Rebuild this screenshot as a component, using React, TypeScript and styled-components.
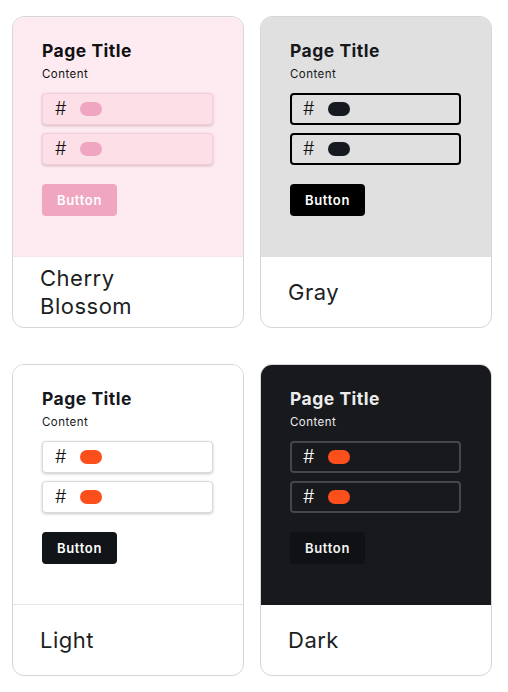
import React, { FC } from "react";
import styled, { createGlobalStyle } from "styled-components";

interface Theme {
  name: string;
  bg: string;
  title: string;
  text: string;
  inputBg: string;
  inputBorder: string;
  inputBorderWidth: number;
  inputShadow: string;
  hash: string;
  pill: string;
  buttonBg: string;
  buttonText: string;
  divider: string;
}

const themes: Theme[] = [
  {
    name: "Cherry Blossom",
    bg: "#fdebf1",
    title: "#111",
    text: "#111",
    inputBg: "#fddfe8",
    inputBorder: "#f1cfd9",
    inputBorderWidth: 1,
    inputShadow: "0 1px 3px rgba(150, 90, 110, 0.35)",
    hash: "#111",
    pill: "#f0a6c0",
    buttonBg: "#f0a6c0",
    buttonText: "#fff",
    divider: "#f3e6ea",
  },
  {
    name: "Gray",
    bg: "#e0e0e1",
    title: "#16181c",
    text: "#16181c",
    inputBg: "#e0e0e1",
    inputBorder: "#000",
    inputBorderWidth: 2,
    inputShadow: "none",
    hash: "#111",
    pill: "#161a20",
    buttonBg: "#000",
    buttonText: "#fff",
    divider: "transparent",
  },
  {
    name: "Light",
    bg: "#fff",
    title: "#16181c",
    text: "#16181c",
    inputBg: "#fff",
    inputBorder: "#dadada",
    inputBorderWidth: 1,
    inputShadow: "0 1px 3px rgba(0, 0, 0, 0.22)",
    hash: "#111",
    pill: "#fc4f1b",
    buttonBg: "#111418",
    buttonText: "#fff",
    divider: "#e6e6e6",
  },
  {
    name: "Dark",
    bg: "#18191c",
    title: "#ececec",
    text: "#ececec",
    inputBg: "#18191c",
    inputBorder: "#45464a",
    inputBorderWidth: 2,
    inputShadow: "none",
    hash: "#fff",
    pill: "#fc4f1b",
    buttonBg: "#101114",
    buttonText: "#f4f4f4",
    divider: "transparent",
  },
];

const GlobalStyle = createGlobalStyle`
  body {
    margin: 0;
    background: #fff;
    font-family: "Inter", "Liberation Sans", sans-serif;
  }
`;

const Grid = styled.div`
  display: grid;
  grid-template-columns: 232px 232px;
  column-gap: 16px;
  row-gap: 36px;
  padding: 16px 12px;
`;

const Card = styled.div`
  display: flex;
  flex-direction: column;
  border: 1px solid #d6d6d6;
  border-radius: 12px;
  overflow: hidden;
  background: #fff;
`;

const Preview = styled.div<{ $t: Theme }>`
  height: 240px;
  box-sizing: border-box;
  padding: 23px 28px 0 29px;
  background: ${(p) => p.$t.bg};
  border-bottom: 1px solid ${(p) => p.$t.divider};
`;

const PageTitle = styled.div<{ $t: Theme }>`
  font-size: 17.5px;
  font-weight: 700;
  line-height: 22px;
  letter-spacing: 0.5px;
  color: ${(p) => p.$t.title};
`;

const ContentText = styled.div<{ $t: Theme }>`
  font-size: 11.5px;
  line-height: 16px;
  margin-top: 4px;
  letter-spacing: 0.45px;
  color: ${(p) => p.$t.text};
`;

const Inputs = styled.div`
  display: flex;
  flex-direction: column;
  gap: 8px;
  margin-top: 11px;
  width: 171px;
`;

const InputRow = styled.div<{ $t: Theme }>`
  height: 32px;
  box-sizing: border-box;
  display: flex;
  align-items: center;
  gap: 14px;
  padding-left: ${(p) => 13 - p.$t.inputBorderWidth}px;
  border-radius: 4px;
  background: ${(p) => p.$t.inputBg};
  border: ${(p) => p.$t.inputBorderWidth}px solid ${(p) => p.$t.inputBorder};
  box-shadow: ${(p) => p.$t.inputShadow};
`;

const Hash = styled.span<{ $t: Theme }>`
  font-size: 18px;
  font-weight: 300;
  line-height: 1;
  color: ${(p) => p.$t.hash};
`;

const Pill = styled.span<{ $t: Theme }>`
  width: 22px;
  height: 14px;
  border-radius: 7px;
  background: ${(p) => p.$t.pill};
`;

const Button = styled.button<{ $t: Theme }>`
  margin-top: 19px;
  width: 75px;
  height: 32px;
  border: none;
  border-radius: 4px;
  font-family: inherit;
  font-size: 13px;
  font-weight: 600;
  letter-spacing: 0.7px;
  background: ${(p) => p.$t.buttonBg};
  color: ${(p) => p.$t.buttonText};
`;

const Footer = styled.div`
  flex: 1;
  min-height: 70px;
  display: flex;
  align-items: center;
  padding: 0 27px;
`;

const Name = styled.div`
  font-size: 22px;
  line-height: 28px;
  letter-spacing: 0.5px;
  color: #1d1f23;
  width: 120px;
`;

const ThemeCard: FC<{ t: Theme }> = ({ t }) => (
  <Card>
    <Preview $t={t}>
      <PageTitle $t={t}>Page Title</PageTitle>
      <ContentText $t={t}>Content</ContentText>
      <Inputs>
        {[0, 1].map((i) => (
          <InputRow key={i} $t={t}>
            <Hash $t={t}>#</Hash>
            <Pill $t={t} />
          </InputRow>
        ))}
      </Inputs>
      <Button $t={t}>Button</Button>
    </Preview>
    <Footer>
      <Name>{t.name}</Name>
    </Footer>
  </Card>
);

const App: FC = () => (
  <>
    <GlobalStyle />
    <Grid>
      {themes.map((t) => (
        <ThemeCard key={t.name} t={t} />
      ))}
    </Grid>
  </>
);

export default App;
